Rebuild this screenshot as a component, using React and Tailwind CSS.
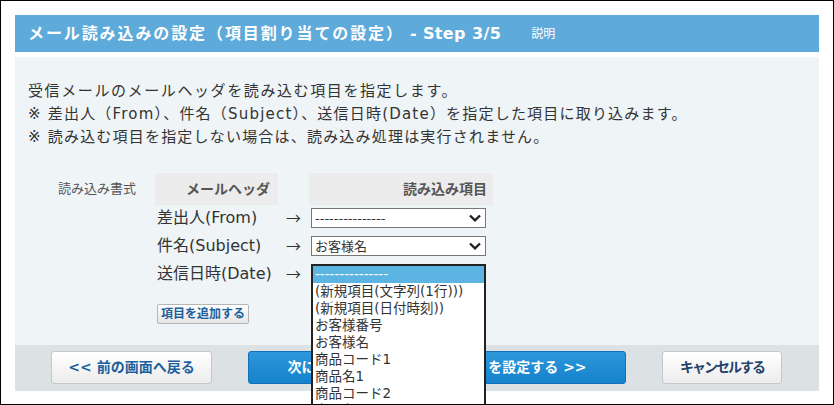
import React from 'react';

const font = { fontFamily: '"DejaVu Sans", "Noto Sans CJK JP", sans-serif' };
const cjk = { fontFamily: '"Noto Sans CJK JP", sans-serif' };

const rows = [
  { label: '差出人(From)', value: '---------------' },
  { label: '件名(Subject)', value: 'お客様名' },
];

const options = [
  '---------------',
  '(新規項目(文字列(1行)))',
  '(新規項目(日付時刻))',
  'お客様番号',
  'お客様名',
  '商品コード1',
  '商品名1',
  '商品コード2',
  '商品名2',
];

const Chevron = () => (
  <svg width="12" height="8" viewBox="0 0 12 8" className="shrink-0">
    <path d="M1 1.5 L6 6.3 L11 1.5" fill="none" stroke="#222" strokeWidth="2.4" />
  </svg>
);

const FakeSelect = ({ value }) => (
  <div className="ml-[2px] w-[175px] h-[20px] border border-[#767676] bg-white flex items-center justify-between pl-[3px] pr-[4px] text-[13px] text-[#333]">
    <span className="leading-none">{value}</span>
    <Chevron />
  </div>
);

const Arrow = () => (
  <div className="w-[31px] pl-[8px] text-[15px] leading-[20px] text-[#333]" style={cjk}>→</div>
);

const App = () => {
  return (
    <div className="w-[834px] h-[405px] border border-black bg-white overflow-hidden relative" style={font}>
      <div className="mx-[14px] mt-[14px]">
        <div className="h-[37px] bg-[#5eaada] flex items-center pl-[13px] text-white">
          <span className="text-[16px] font-bold tracking-[1.9px]">メール読み込みの設定（項目割り当ての設定）</span>
          <span className="text-[16px] font-bold tracking-[0.4px]">&nbsp;- Step 3/5</span>
          <span className="ml-[30px] text-[12px]">説明</span>
        </div>

        <div className="mt-[5px] bg-[#eff4f7] pt-[23px] pb-[20px]">
          <div className="pl-[13px] text-[15px] leading-[23px] text-[#333] tracking-[1.2px]">
            <p className="tracking-[1.6px]">受信メールのメールヘッダを読み込む項目を指定します。</p>
            <p>※ 差出人（From）、件名（Subject）、送信日時(Date）を指定した項目に取り込みます。</p>
            <p>※ 読み込む項目を指定しない場合は、読み込み処理は実行されません。</p>
          </div>

          <div className="mt-[24px] ml-[43px] flex">
            <div className="w-[97px] pt-[6px] text-[13px] text-[#555]">読み込み書式</div>
            <div>
              <div className="flex h-[32px]">
                <div className="w-[123px] bg-[#ececec] flex items-center justify-end pr-[8px] text-[14px] font-bold text-[#555]">メールヘッダ</div>
                <div className="w-[31px]"></div>
                <div className="w-[184px] bg-[#ececec] flex items-center justify-end pr-[6px] text-[14px] font-bold text-[#555]">読み込み項目</div>
              </div>

              {rows.map((row) => (
                <div key={row.label} className="flex h-[28px] pt-[3px]">
                  <div className="w-[123px] pl-[2px] text-[16px] leading-[20px] text-[#333]">{row.label}</div>
                  <Arrow />
                  <FakeSelect value={row.value} />
                </div>
              ))}

              <div className="flex h-[28px] pt-[3px]">
                <div className="w-[123px] pl-[2px] text-[16px] leading-[20px] text-[#333]">送信日時(Date)</div>
                <Arrow />
                <div className="relative ml-[2px] w-[175px]">
                  <div className="absolute left-0 top-0 w-[175px] border-2 border-[#222] bg-white z-10">
                    {options.map((opt, i) => (
                      <div
                        key={opt}
                        className={i === 0
                          ? 'h-[17px] leading-[17px] pl-[2px] text-[13.5px] bg-[#5bb4e1] text-white'
                          : 'h-[17px] leading-[17px] pl-[2px] text-[13.5px] text-[#333]'}
                      >
                        {opt}
                      </div>
                    ))}
                  </div>
                </div>
              </div>

              <button className="mt-[15px] ml-[2px] h-[20px] px-[3px] border border-[#b5b5b5] rounded-[2px] bg-gradient-to-b from-white to-[#e6e6e6] text-[12px] font-bold text-[#1d5f9c] leading-none">
                項目を追加する
              </button>
            </div>
          </div>
        </div>

        <div className="h-[46px] bg-[#dce1e4] flex justify-center gap-[36px] pt-[6px] pr-[1px]">
          <button className="w-[161px] h-[33px] border border-[#c4c8cb] rounded-[3px] bg-gradient-to-b from-white to-[#ececec] text-[14px] font-bold text-[#1d5f9c]">
            &lt;&lt; 前の画面へ戻る
          </button>
          <button className="w-[378px] h-[33px] border border-[#1170b6] rounded-[3px] bg-gradient-to-b from-[#2d97da] to-[#1482cd] text-[14px] font-bold text-white">
            次にメール本文の読み込み項目 を設定する &gt;&gt;
          </button>
          <button className="w-[120px] h-[33px] border border-[#c4c8cb] rounded-[3px] bg-gradient-to-b from-white to-[#ececec] text-[14px] font-bold text-[#23436a] tracking-[-2px]">
            キャンセルする
          </button>
        </div>
      </div>
    </div>
  );
};

export default App;
